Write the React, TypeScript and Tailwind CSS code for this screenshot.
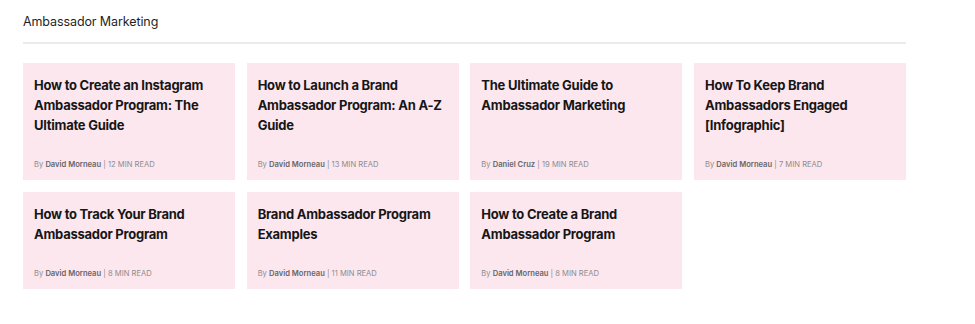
import React from "react";

type Post = {
  title: string;
  author: string;
  minutes: number;
};

const posts: Post[] = [
  { title: "How to Create an Instagram Ambassador Program: The Ultimate Guide", author: "David Morneau", minutes: 12 },
  { title: "How to Launch a Brand Ambassador Program: An A-Z Guide", author: "David Morneau", minutes: 13 },
  { title: "The Ultimate Guide to Ambassador Marketing", author: "Daniel Cruz", minutes: 19 },
  { title: "How To Keep Brand Ambassadors Engaged [Infographic]", author: "David Morneau", minutes: 7 },
  { title: "How to Track Your Brand Ambassador Program", author: "David Morneau", minutes: 8 },
  { title: "Brand Ambassador Program Examples", author: "David Morneau", minutes: 11 },
  { title: "How to Create a Brand Ambassador Program", author: "David Morneau", minutes: 8 },
];

export default function App() {
  return (
    <div className="min-h-[324px] bg-white font-['Inter',sans-serif]">
      <div className="ml-[23px] w-[883px] pt-[12px]">
        {/* Section header */}
        <h2 className="text-[12.5px] leading-[20px] tracking-[-0.1px] text-[#1f1f1f]">Ambassador Marketing</h2>
        <div className="mt-[10px] h-[2px] bg-[#ebebeb]" />

        {/* Posts grid */}
        <div className="mt-[19px] grid grid-cols-4 gap-x-[11.67px] gap-y-[12px]">
          {posts.map((p) => (
            <PostCard key={p.title} post={p} />
          ))}
        </div>
      </div>
    </div>
  );
}

function PostCard({ post }: { post: Post }) {
  return (
    <a href="#" className="flex flex-col bg-[#fde7ef] px-[11px] pt-[12px] pb-[10px]">
      <h3 className="mb-[25px] text-[13px] leading-[20px] font-bold tracking-[-0.25px] text-[#161616]">
        {post.title}
      </h3>
      <p className="mt-auto text-[7.6px] leading-[10px] text-[#8c8c8c]">
        By <span className="font-semibold text-[#666]">{post.author}</span> | {post.minutes} MIN READ
      </p>
    </a>
  );
}
